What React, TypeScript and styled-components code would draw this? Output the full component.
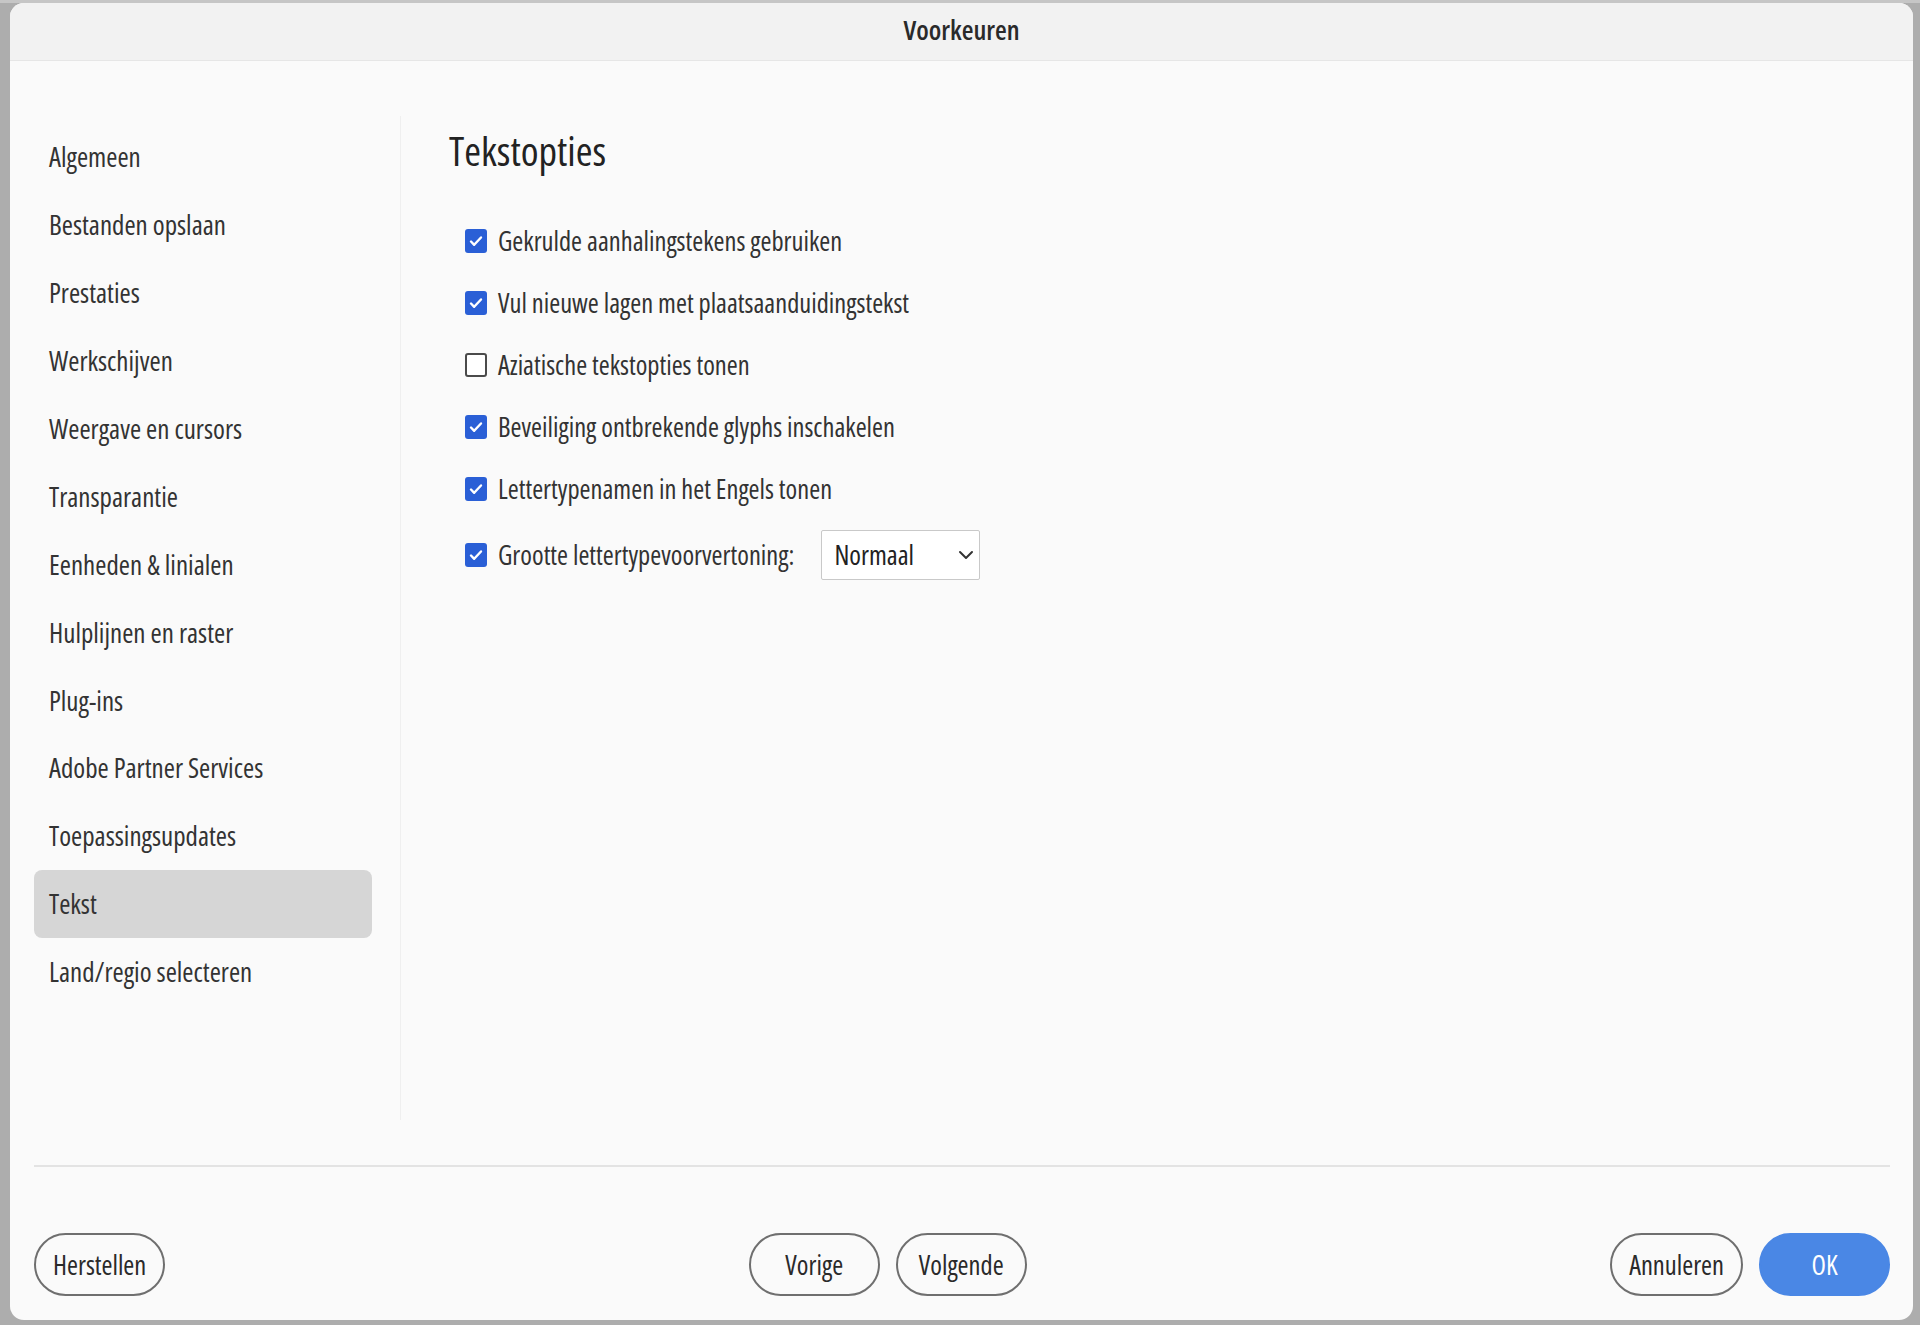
import React from 'react';
import styled, { createGlobalStyle } from 'styled-components';

const GlobalStyle = createGlobalStyle`
  html, body {
    margin: 0;
    padding: 0;
    background: #adadad;
  }
  body {
    font-family: "Open Sans", "Liberation Sans", sans-serif;
    font-stretch: 75%;
    color: #333333;
  }
`;

const Backdrop = styled.div`
  width: 1920px;
  height: 1325px;
  box-sizing: border-box;
  padding: 3px 7px 5px 10px;
  background: linear-gradient(to bottom, #c6c6c6 0, #c6c6c6 3px, #adadad 3px);
`;

const Dialog = styled.div`
  height: 100%;
  display: flex;
  flex-direction: column;
  background: #fafafa;
  border-radius: 14px;
  overflow: hidden;
`;

const TitleBar = styled.div`
  height: 58px;
  flex: none;
  box-sizing: border-box;
  padding-bottom: 5px;
  display: flex;
  align-items: center;
  justify-content: center;
  background: #f2f2f2;
  border-bottom: 1px solid #e6e6e6;
  font-size: 27px;
  font-weight: 600;
  color: #2a2a2a;
`;

const Body = styled.div`
  flex: 1;
  display: flex;
  min-height: 0;
`;

const Sidebar = styled.nav`
  width: 366px;
  flex: none;
  margin: 55px 0 45px;
  padding: 7px 0 0 24px;
  box-sizing: content-box;
  border-right: 1px solid #efefef;
  display: flex;
  flex-direction: column;
`;

const NavItem = styled.div<{ $active?: boolean }>`
  width: 338px;
  height: 67.9px;
  flex: none;
  display: flex;
  align-items: center;
  padding-left: 15px;
  box-sizing: border-box;
  border-radius: 8px;
  font-size: 27px;
  background: ${(p) => (p.$active ? '#d6d6d6' : 'transparent')};
`;

const Content = styled.section`
  flex: 1;
  margin-top: 55px;
  padding: 11px 0 0 48px;
  display: flex;
  flex-direction: column;
`;

const Heading = styled.h1`
  margin: 0 0 35px;
  height: 48px;
  line-height: 48px;
  font-size: 40.5px;
  font-weight: 500;
  color: #222;
`;

const Row = styled.label<{ $extra?: number }>`
  height: 62px;
  margin-top: ${(p) => p.$extra ?? 0}px;
  display: flex;
  align-items: center;
  padding-left: 16px;
  font-size: 26.5px;
  color: #333333;
`;

const Box = styled.span<{ $checked: boolean }>`
  width: 22px;
  height: 24px;
  flex: none;
  box-sizing: border-box;
  border-radius: 3px;
  margin-right: 11px;
  display: flex;
  align-items: center;
  justify-content: center;
  background: ${(p) => (p.$checked ? '#2a5fd6' : '#ffffff')};
  border: ${(p) => (p.$checked ? 'none' : '2px solid #4a4a4a')};
`;

const Select = styled.div`
  width: 159px;
  height: 50px;
  margin-left: 27px;
  box-sizing: border-box;
  border: 1px solid #c9c9c9;
  border-radius: 2px;
  background: #fff;
  display: flex;
  align-items: center;
  justify-content: space-between;
  padding: 0 5px 0 12px;
  font-size: 26.5px;
  color: #222;
`;

const Separator = styled.div`
  height: 2px;
  flex: none;
  margin: 0 23px 0 24px;
  background: #e3e3e3;
`;

const Footer = styled.div`
  height: 153px;
  flex: none;
  box-sizing: border-box;
  padding: 66px 23px 0 24px;
  display: flex;
  align-items: flex-start;
  justify-content: space-between;
`;

const Group = styled.div`
  display: flex;
  gap: 16px;
`;

const Pill = styled.button<{ $primary?: boolean }>`
  height: 63px;
  padding: 0 17px;
  min-width: 131px;
  border-radius: 32px;
  font-family: inherit;
  font-stretch: 75%;
  font-size: 26.5px;
  cursor: pointer;
  color: ${(p) => (p.$primary ? '#ffffff' : '#2a2a2a')};
  background: ${(p) => (p.$primary ? '#4a87e5' : 'transparent')};
  border: 2px solid ${(p) => (p.$primary ? '#4a87e5' : '#6f6f6f')};
`;

const Check = () => (
  <svg width="16" height="16" viewBox="0 0 16 16" fill="none">
    <path d="M3 8.5l3.2 3.3L13 4.5" stroke="#fff" strokeWidth="2.4" strokeLinecap="round" strokeLinejoin="round" />
  </svg>
);

const Chevron = () => (
  <svg width="16" height="10" viewBox="0 0 16 10" fill="none">
    <path d="M2 2l6 6 6-6" stroke="#333" strokeWidth="2" strokeLinecap="round" strokeLinejoin="round" />
  </svg>
);

const sections = [
  'Algemeen',
  'Bestanden opslaan',
  'Prestaties',
  'Werkschijven',
  'Weergave en cursors',
  'Transparantie',
  'Eenheden & linialen',
  'Hulplijnen en raster',
  'Plug-ins',
  'Adobe Partner Services',
  'Toepassingsupdates',
  'Tekst',
  'Land/regio selecteren',
];

const options = [
  { label: 'Gekrulde aanhalingstekens gebruiken', checked: true },
  { label: 'Vul nieuwe lagen met plaatsaanduidingstekst', checked: true },
  { label: 'Aziatische tekstopties tonen', checked: false },
  { label: 'Beveiliging ontbrekende glyphs inschakelen', checked: true },
  { label: 'Lettertypenamen in het Engels tonen', checked: true },
];

export default function App() {
  return (
    <>
      <GlobalStyle />
      <Backdrop>
        <Dialog>
          <TitleBar>Voorkeuren</TitleBar>
          <Body>
            <Sidebar>
              {sections.map((s) => (
                <NavItem key={s} $active={s === 'Tekst'}>
                  {s}
                </NavItem>
              ))}
            </Sidebar>
            <Content>
              <Heading>Tekstopties</Heading>
              {options.map((o) => (
                <Row key={o.label}>
                  <Box $checked={o.checked}>{o.checked && <Check />}</Box>
                  {o.label}
                </Row>
              ))}
              <Row $extra={4}>
                <Box $checked>
                  <Check />
                </Box>
                Grootte lettertypevoorvertoning:
                <Select>
                  Normaal
                  <Chevron />
                </Select>
              </Row>
            </Content>
          </Body>
          <Separator />
          <Footer>
            <Group>
              <Pill>Herstellen</Pill>
            </Group>
            <Group>
              <Pill>Vorige</Pill>
              <Pill>Volgende</Pill>
            </Group>
            <Group>
              <Pill>Annuleren</Pill>
              <Pill $primary>OK</Pill>
            </Group>
          </Footer>
        </Dialog>
      </Backdrop>
    </>
  );
}
